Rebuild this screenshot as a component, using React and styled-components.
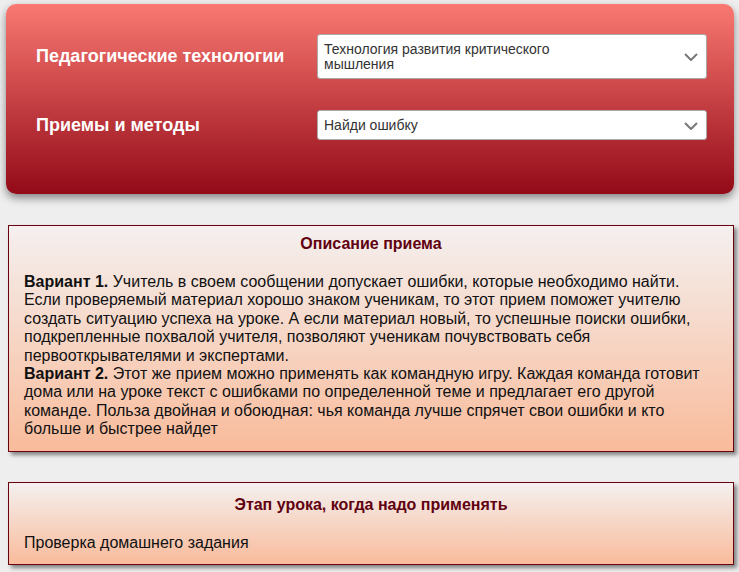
import styled, { createGlobalStyle } from "styled-components"

const GlobalStyle = createGlobalStyle`
    body {
        margin: 0;
        background: #eeeeee;
        font-family: "Liberation Sans", Arial, sans-serif;
    }
`

const Chevron = () => (
    <svg width="14" height="8" viewBox="0 0 14 8">
        <path d="M1 1 L7 7 L13 1" fill="none" stroke="#777" strokeWidth="2" />
    </svg>
)

const filters = [
    { label: 'Педагогические технологии', value: 'Технология развития критического мышления' },
    { label: 'Приемы и методы', value: 'Найди ошибку' },
]

export default function App() {
    return (<Styled.Page>
        <GlobalStyle />
        <Styled.Header>
            {filters.map((f) => <Styled.Row key={f.label}>
                <Styled.Label>{f.label}</Styled.Label>
                <Styled.Select>
                    <Styled.Value>{f.value}</Styled.Value>
                    <Chevron />
                </Styled.Select>
            </Styled.Row>)}
        </Styled.Header>
        <Styled.Card>
            <Styled.Title>Описание приема</Styled.Title>
            <Styled.Text>
                <b>Вариант 1.</b> Учитель в своем сообщении допускает ошибки, которые необходимо найти. Если проверяемый материал хорошо знаком ученикам, то этот прием поможет учителю создать ситуацию успеха на уроке. А если материал новый, то успешные поиски ошибки, подкрепленные похвалой учителя, позволяют ученикам почувствовать себя первооткрывателями и экспертами.<br />
                <b>Вариант 2.</b> Этот же прием можно применять как командную игру. Каждая команда готовит дома или на уроке текст с ошибками по определенной теме и предлагает его другой команде. Польза двойная и обоюдная: чья команда лучше спрячет свои ошибки и кто больше и быстрее найдет
            </Styled.Text>
        </Styled.Card>
        <Styled.Card $top={13}>
            <Styled.Title>Этап урока, когда надо применять</Styled.Title>
            <Styled.Text>Проверка домашнего задания</Styled.Text>
        </Styled.Card>
    </Styled.Page>)
}

const Styled = {
    Page: styled.div`
        display: flex;
        flex-flow: column;
        gap: 30px;
        padding: 4px 5px 20px 6px;
    `,
    Header: styled.div`
        display: flex;
        flex-flow: column;
        gap: 31px;
        margin-bottom: 1px;
        padding: 30px 27px 54px 30px;
        border-radius: 10px;
        background: linear-gradient(to bottom, #f97971, #930a18);
        box-shadow: 0 4px 8px rgba(0, 0, 0, 0.45);
    `,
    Row: styled.div`
        display: flex;
        align-items: center;
        justify-content: space-between;
    `,
    Label: styled.div`
        color: #fff;
        font-size: 18px;
        font-weight: bold;
    `,
    Select: styled.div`
        display: flex;
        align-items: center;
        justify-content: space-between;
        box-sizing: border-box;
        width: 390px;
        padding: 7px 8px 6px 6px;
        background: #fff;
        border: 1px solid #aaa;
        border-radius: 3px;
        color: #333;
        font-size: 14px;
        line-height: 15px;
    `,
    Value: styled.span`
        max-width: 250px;
    `,
    Card: styled.div`
        margin-left: 2px;
        padding: ${(p) => p.$top || 9}px 15px 12px;
        border: 1px solid #6b0010;
        background: linear-gradient(to bottom, #f4f0ef, #f9bb9b);
        box-shadow: 3px 3px 4px rgba(0, 0, 0, 0.45);
        font-size: 16px;
        color: #111;
    `,
    Title: styled.div`
        text-align: center;
        font-weight: bold;
        color: #600010;
        margin-bottom: 20px;
    `,
    Text: styled.div`
        line-height: 18.4px;
    `,
}
